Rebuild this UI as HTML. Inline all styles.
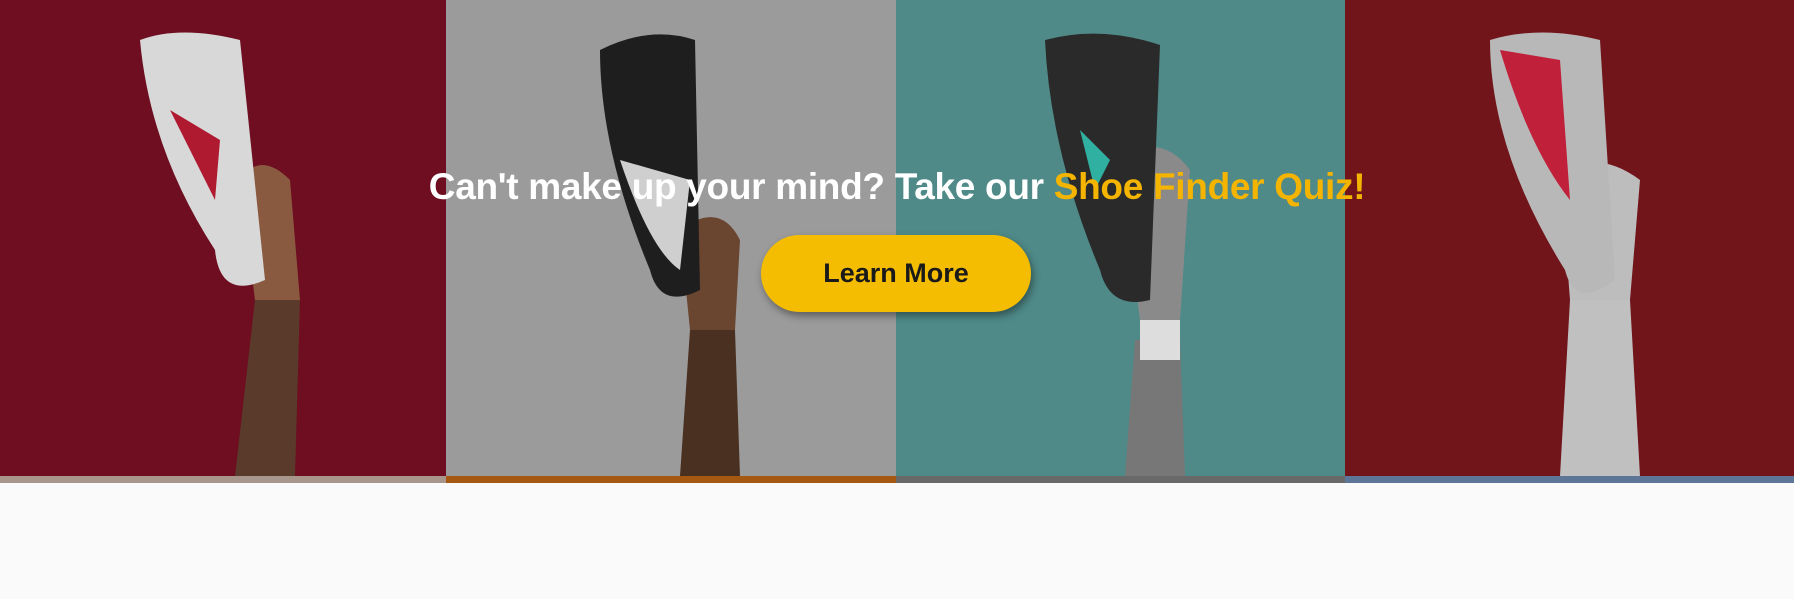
<!DOCTYPE html>
<html><head><style>
html,body{margin:0;padding:0;background:#fafafa;width:1794px;height:599px;overflow:hidden}
.wrap{position:relative;width:1794px;height:483px}
.p{position:absolute;top:0;height:476px}
.b{position:absolute;top:476px;height:7px}
h2{position:absolute;top:166px;left:0;width:1794px;text-align:center;margin:0;font:bold 37px "Liberation Sans",sans-serif;color:#fff;letter-spacing:-0.3px}
h2 span{color:#f5b400}
.btn{position:absolute;left:761px;top:235px;width:270px;height:77px;border-radius:39px;background:#f5bd02;box-shadow:2px 4px 8px rgba(0,0,0,.4);font:bold 27px "Liberation Sans",sans-serif;color:#1a1a1a;text-align:center;line-height:77px}
</style></head><body>
<div class="wrap">
<div class="p" style="left:0;width:446px;background:#6e0e20"></div>
<div class="p" style="left:446px;width:450px;background:#9b9b9b"></div>
<div class="p" style="left:896px;width:449px;background:#4f8a88"></div>
<div class="p" style="left:1345px;width:449px;background:#71151b"></div>
<svg width="1794" height="476" style="position:absolute;left:0;top:0">
<path d="M235 476 L255 300 L300 300 L295 476Z" fill="#5a3a2a"/>
<path d="M240 180 Q260 150 290 180 L300 300 L255 300Z" fill="#8a5a40"/>
<path d="M140 40 Q180 25 240 40 L265 280 Q220 300 215 250 Q150 150 140 40Z" fill="#d8d8d8"/>
<path d="M170 110 L220 140 L215 200Z" fill="#b01a30"/>
<path d="M680 476 L690 330 L735 330 L740 476Z" fill="#4a3020"/>
<path d="M680 230 Q720 200 740 240 L735 330 L690 330Z" fill="#6a4530"/>
<path d="M600 50 Q650 25 695 40 L700 290 Q660 310 650 270 Q600 150 600 50Z" fill="#1e1e1e"/>
<path d="M620 160 L690 180 L680 270 Q650 250 620 160Z" fill="#cfcfcf"/>
<path d="M1125 476 L1135 340 L1180 340 L1185 476Z" fill="#777"/>
<path d="M1140 320 L1180 320 L1180 360 L1140 360Z" fill="#ddd"/>
<path d="M1120 160 Q1160 130 1190 170 L1180 320 L1140 320Z" fill="#8a8a8a"/>
<path d="M1045 40 Q1100 25 1160 45 L1150 300 Q1110 310 1100 270 Q1050 150 1045 40Z" fill="#2a2a2a"/>
<path d="M1080 130 L1110 160 L1095 190Z" fill="#30b0a0"/>
<path d="M1560 476 L1570 300 L1630 300 L1640 476Z" fill="#c0c0c0"/>
<path d="M1560 170 Q1600 150 1640 180 L1630 300 L1570 300Z" fill="#bdbdbd"/>
<path d="M1490 40 Q1540 25 1600 40 L1615 280 Q1575 310 1565 270 Q1490 150 1490 40Z" fill="#b8b8b8"/>
<path d="M1500 50 L1560 60 L1570 200 Q1530 150 1500 50Z" fill="#c0203a"/>
</svg>
<div class="b" style="left:0;width:446px;background:#a8968c"></div>
<div class="b" style="left:446px;width:450px;background:#a45810"></div>
<div class="b" style="left:896px;width:449px;background:#696969"></div>
<div class="b" style="left:1345px;width:449px;background:#5d7596"></div>
<h2>Can't make up your mind? Take our <span>Shoe Finder Quiz!</span></h2>
<div class="btn">Learn More</div>
</div>
</body></html>
